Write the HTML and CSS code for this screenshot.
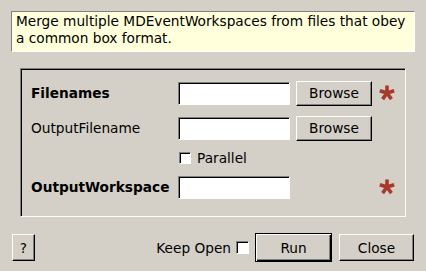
FILE: index.html
```html
<!DOCTYPE html>
<html lang="en">
<head>
    <meta charset="UTF-8">
    <meta name="viewport" content="width=device-width, initial-scale=1.0">
    <title>MergeMDFiles</title>
    <link rel="stylesheet" href="styles.css">
</head>
<body>

    <div class="dialog">
        <p class="desc">Merge multiple MDEventWorkspaces from files that obey a common box format.</p>

        <div class="group">
            <label class="prop bold">Filenames</label>
            <input type="text" class="field">
            <button class="btn browse">Browse</button>
            <svg class="star" viewBox="0 0 18 18"><path d="M9 9V1.5M9 9L16.2 6.7M9 9L13.4 15.1M9 9L4.6 15.1M9 9L1.8 6.7"/></svg>

            <label class="prop">OutputFilename</label>
            <input type="text" class="field">
            <button class="btn browse">Browse</button>
            <span></span>

            <span></span>
            <label class="check"><span class="box"></span>Parallel</label>
            <span></span>
            <span></span>

            <label class="prop bold">OutputWorkspace</label>
            <input type="text" class="field">
            <span></span>
            <svg class="star" viewBox="0 0 18 18"><path d="M9 9V1.5M9 9L16.2 6.7M9 9L13.4 15.1M9 9L4.6 15.1M9 9L1.8 6.7"/></svg>
        </div>

        <div class="footer">
            <button class="btn help">?</button>
            <span class="spacer"></span>
            <label class="keep">Keep Open <span class="box"></span></label>
            <button class="btn run">Run</button>
            <button class="btn close">Close</button>
        </div>
    </div>

</body>
</html>
```

FILE: styles.css
```css
body {
    margin: 0;
    background: #d4d0c8;
    font-family: "DejaVu Sans", sans-serif;
    font-size: 13.7px;
    color: #000;
}
.dialog {
    width: 426px;
    height: 271px;
    overflow: hidden;
}
.desc {
    margin: 11px 11px 0 11px;
    padding: 1px 0 0 4px;
    background: #ffffdc;
    border-top: 1px solid #808080;
    border-left: 1px solid #808080;
    border-right: 1px solid #ffffff;
    border-bottom: 1px solid #ffffff;
    line-height: 17px;
    box-sizing: border-box;
    height: 41px;
}
.group {
    margin: 16px 0 0 20px;
    width: 386px;
    height: 149px;
    box-sizing: border-box;
    border-top: 1px solid #808080;
    border-left: 1px solid #808080;
    border-right: 1px solid #ffffff;
    border-bottom: 1px solid #ffffff;
    box-shadow: inset 1px 1px 0 #000;
    padding: 11px 0 0 10px;
    display: grid;
    grid-template-columns: 141px 112px 76px 18px;
    grid-template-rows: 26px 26px 16px 24px;
    column-gap: 6px;
    row-gap: 9px;
    align-items: center;
}
.prop {
    white-space: nowrap;
}
.bold {
    font-weight: bold;
}
.field {
    width: 112px;
    height: 23px;
    margin: 0;
    padding: 0;
    box-sizing: border-box;
    background: #fff;
    border-top: 1px solid #808080;
    border-left: 1px solid #808080;
    border-right: 1px solid #ffffff;
    border-bottom: 1px solid #ffffff;
    box-shadow: inset 1px 1px 0 #000;
    outline: none;
}
.btn {
    font-family: "DejaVu Sans", sans-serif;
    font-size: 13.7px;
    color: #000;
    background: #d4d0c8;
    margin: 0;
    padding: 0;
    box-sizing: border-box;
    border-top: 1px solid #ffffff;
    border-left: 1px solid #ffffff;
    border-right: 1px solid #000;
    border-bottom: 1px solid #000;
    box-shadow: inset -1px -1px 0 #808080;
}
.browse {
    width: 76px;
    height: 25px;
}
.star {
    width: 18px;
    height: 18px;
    fill: none;
    stroke: #a8392b;
    stroke-width: 3.6;
}
.check {
    display: flex;
    align-items: center;
    gap: 6px;
    padding-left: 1px;
}
.box {
    display: inline-block;
    width: 12px;
    height: 12px;
    box-sizing: border-box;
    background: #fff;
    border-top: 1px solid #808080;
    border-left: 1px solid #808080;
    border-right: 1px solid #fff;
    border-bottom: 1px solid #fff;
    box-shadow: inset 1px 1px 0 #000;
}
.footer {
    display: flex;
    align-items: center;
    height: 29px;
    margin-top: 16px;
    padding: 0 12px;
}
.spacer {
    flex: 1;
}
.help {
    width: 23px;
    height: 27px;
}
.keep {
    display: flex;
    align-items: center;
    gap: 5px;
    margin-right: 6px;
}
.keep .box {
    width: 13px;
    height: 13px;
}
.run {
    width: 77px;
    height: 29px;
    border: 1px solid #000;
    box-shadow: inset 1px 1px 0 #fff, inset -1px -1px 0 #000, inset -2px -2px 0 #808080;
    margin-right: 7px;
}
.close {
    width: 75px;
    height: 27px;
}
```
